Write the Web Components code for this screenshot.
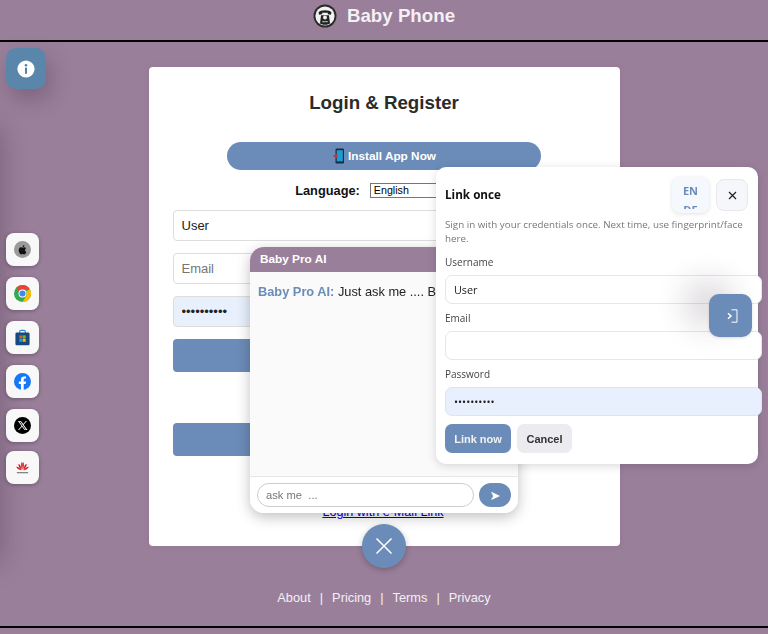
<!DOCTYPE html>
<html lang="en">
<head>
<meta charset="utf-8">
<title>Baby Phone</title>
<style>
  html, body { margin: 0; height: 634px; overflow: hidden; }
  body {
    background: #9a7f9b;
    font-family: "Liberation Sans", Arial, sans-serif;
    display: flex;
    flex-direction: column;
  }
</style>
</head>
<body>
<bp-header></bp-header>
<bp-main>
  <bp-login-card></bp-login-card>
</bp-main>
<bp-footer></bp-footer>

<bp-edge-shade></bp-edge-shade>
<bp-info-button></bp-info-button>
<bp-store-rail></bp-store-rail>
<bp-chat></bp-chat>
<bp-link-dialog></bp-link-dialog>
<bp-signin-button></bp-signin-button>
<bp-chat-toggle></bp-chat-toggle>

<script>
class BaseElement extends HTMLElement {
  connectedCallback() {
    if (this.shadowRoot) return;
    const shadow = this.attachShadow({ mode: 'open' });
    shadow.innerHTML = `<style>${this.constructor.css}</style>${this.constructor.html}`;
  }
}

class BpHeader extends BaseElement {
  static css = `
    :host {
      display: flex; align-items: center; justify-content: center; gap: 10px;
      height: 42px; padding-bottom: 9px; box-sizing: border-box;
      border-bottom: 2px solid #000; flex: none;
    }
    svg { width: 24px; height: 24px; display: block; }
    h1 { margin: 0; font-size: 18.72px; font-weight: 700; color: #f4f0f4; line-height: 24px; }
  `;
  static html = `
    <svg viewBox="0 0 24 24" aria-hidden="true">
      <circle cx="12" cy="12" r="11.5" fill="#2b2b2b"/>
      <circle cx="12" cy="12" r="9.6" fill="#f2f2f2"/>
      <path d="M5.5 8.5c1.500-3 11.500-3 13 0l-.6 2.300-3-.6-.2-1.500H9.300l-.2 1.500-3 .6z" fill="#222"/>
      <path d="M8 11.200h8l1 8.200c-3 1.800-7 1.800-10 0z" fill="#222"/>
      <circle cx="12" cy="13.600" r="2" fill="#eee"/>
      <path d="M9.500 17h1.200v1.200H9.500zM11.400 17h1.200v1.200h-1.200zM13.300 17h1.200v1.200h-1.200z" fill="#eee"/>
    </svg>
    <h1>Baby Phone</h1>
  `;
}

class BpMain extends BaseElement {
  static css = `
    :host { display: flex; justify-content: center; padding-top: 25px; flex: none; height: 504px; box-sizing: border-box; }
  `;
  static html = `<slot></slot>`;
}

class BpLoginCard extends BaseElement {
  static css = `
    :host {
      display: block; box-sizing: border-box; width: 471px; height: 479px;
      background: #fff; border-radius: 4px; padding: 24px;
      box-shadow: 0 0 6px rgba(0,0,0,.08);
      color: #222;
    }
    h2 { margin: 0; text-align: center; font-size: 18.72px; line-height: 24px; font-weight: 700; color: #2b2b2b; }
    .install {
      display: flex; align-items: center; justify-content: center; gap: 3px;
      width: 314px; height: 28px; margin: 27px auto 0; border-radius: 14px;
      background: #6b8cb8; color: #fff; font: 700 11.8px "Liberation Sans", Arial, sans-serif; border: 0;
      padding: 0;
    }
    .install svg { width: 13px; height: 16px; }
    .lang { display: flex; align-items: center; justify-content: center; gap: 10px; height: 20px; margin-top: 10px; font-size: 12.8px; font-weight: 700; color: #111; }
    select {
      width: 103px; height: 15px; font: 10.7px "Liberation Sans", Arial, sans-serif; padding: 0 0 0 3px;
      border: 1px solid #767676; border-radius: 0; background: #fff; color: #000;
      appearance: none;
    }
    input {
      display: block; box-sizing: border-box; width: 100%; height: 31px; margin-top: 12px;
      border: 1px solid #ddd; border-radius: 4px; padding: 0 8px 1px;
      font: 13px "Liberation Sans", Arial, sans-serif; color: #222; background: #fff; outline: none;
    }
    input::placeholder { color: #757575; }
    input.first { margin-top: 10px; }
    input.filled { background: #e8f0fe; }
    .action { display: block; width: 100%; height: 33px; margin-top: 12px; background: #6b8cb8; border: 0; border-radius: 4px; padding: 0; }
    .action.second { margin-top: 51px; }
    a { display: block; text-align: center; margin-top: 49px; margin-right: 2px; font-size: 12.6px; line-height: 15px; color: #0000ee; text-decoration: underline; }
  `;
  static html = `
    <h2>Login &amp; Register</h2>
    <button class="install">
      <svg viewBox="0 0 13 16" aria-hidden="true">
        <rect x="3.5" y="0.5" width="8.5" height="15" rx="1.2" fill="#1c2b3a"/>
        <rect x="4.7" y="2.2" width="6.1" height="11.2" fill="#1e9bd7"/>
        <path d="M1.500 7h2.100V5.400L6.400 8 3.600 10.600V9H1.500z" fill="#c0392b"/>
      </svg>
      Install App Now
    </button>
    <div class="lang">
      <label for="lang">Language:</label>
      <select id="lang"><option>English</option></select>
    </div>
    <input class="first" type="text" value="User" aria-label="Username">
    <input type="email" placeholder="Email">
    <input class="filled" type="password" value="••••••••••" aria-label="Password">
    <button class="action" aria-label="Login"></button>
    <button class="action second" aria-label="Register"></button>
    <a href="#">Login with e-Mail Link</a>
  `;
}

class BpFooter extends BaseElement {
  static css = `
    :host {
      display: flex; align-items: flex-start; justify-content: center; flex: none;
      height: 82px; box-sizing: border-box; padding-top: 44px;
      border-bottom: 2px solid #000;
      color: #f4f0f4; font-size: 12.8px; line-height: 16px;
    }
    a { color: inherit; text-decoration: none; }
    span { margin: 0 9px; }
  `;
  static html = `
    <a href="#">About</a><span>|</span><a href="#">Pricing</a><span>|</span><a href="#">Terms</a><span>|</span><a href="#">Privacy</a>
  `;
}

// soft shadow of a panel parked just off the left edge
class BpEdgeShade extends BaseElement {
  static css = `
    :host {
      position: fixed; left: -30px; top: 130px; width: 30px; height: 430px;
      box-shadow: 0 0 26px 2px rgba(50,30,50,.3);
    }
  `;
  static html = ``;
}

class BpInfoButton extends BaseElement {
  static css = `
    :host {
      position: fixed; left: 6px; top: 48px; width: 40px; height: 41px;
      background: #5b86ab; border-radius: 10px;
      display: flex; align-items: center; justify-content: center;
      box-shadow: 4px 10px 22px rgba(60,40,60,.32);
    }
    svg { width: 18px; height: 18px; }
  `;
  static html = `
    <svg viewBox="0 0 18 18" aria-hidden="true">
      <circle cx="9" cy="9" r="8.6" fill="#fff"/>
      <circle cx="9" cy="5.200" r="1.300" fill="#5b7f9f"/>
      <rect x="8" y="7.600" width="2" height="6.200" fill="#5b7f9f"/>
    </svg>
  `;
}

const STORE_ICONS = {
  apple: `<circle cx="12" cy="12" r="12" fill="#9a9a9a"/>
    <path d="M15.6 12.600c0-1.600 1.300-2.300 1.400-2.400-.8-1.100-2-1.300-2.400-1.300-1-.1-2 .6-2.500.6s-1.300-.6-2.200-.6c-1.100 0-2.100.7-2.700 1.700-1.200 2-.3 5 .8 6.600.6.800 1.200 1.700 2.100 1.700.8 0 1.200-.5 2.200-.5s1.300.5 2.200.5 1.500-.8 2-1.600c.6-.9.9-1.800.9-1.900-.1 0-1.800-.7-1.800-2.800zM14 7.800c.5-.6.8-1.400.7-2.200-.7 0-1.500.5-2 1.100-.4.5-.8 1.300-.7 2.100.8.100 1.500-.4 2-1z" fill="#111"/>`,
  chrome: `<circle cx="12" cy="12" r="12" fill="#34a853"/>
    <path d="M12 0a12 12 0 0 1 10.400 6H12a6 6 0 0 0-5.200 3L3.300 3.700A12 12 0 0 1 12 0z" fill="#ea4335"/>
    <path d="M22.400 6A12 12 0 0 1 12 24l5.200-9a6 6 0 0 0 0-6z" fill="#fbbc05"/>
    <circle cx="12" cy="12" r="5.600" fill="#fff"/><circle cx="12" cy="12" r="4.300" fill="#4285f4"/>`,
  store: `<path d="M8 6V4a2 2 0 0 1 2-2h4a2 2 0 0 1 2 2v2" fill="none" stroke="#2b88d8" stroke-width="1.600"/>
    <rect x="2" y="5" width="20" height="18" rx="2" fill="#17497e"/>
    <rect x="7.500" y="9" width="4.200" height="4.200" fill="#f25022"/><rect x="12.300" y="9" width="4.200" height="4.200" fill="#7fba00"/>
    <rect x="7.500" y="13.800" width="4.200" height="4.200" fill="#00a4ef"/><rect x="12.300" y="13.800" width="4.200" height="4.200" fill="#ffb900"/>`,
  facebook: `<circle cx="12" cy="12" r="12" fill="#1877f2"/>
    <path d="M16.500 15.500l.5-3.500h-3.300V9.800c0-1 .5-1.900 2-1.900H17V5c0 0-1.400-.2-2.700-.2-2.700 0-4.500 1.600-4.500 4.600V12h-3v3.500h3V24h3.900v-8.500z" fill="#fff"/>`,
  x: `<circle cx="12" cy="12" r="12" fill="#000"/>
    <path d="M5.500 5.500h4.200l3.300 4.500 3.800-4.500h1.400l-4.600 5.400 5.500 7.600h-4.200l-3.600-4.900-4.200 4.900H5.700l5-5.800z M7.500 6.500l8.100 11h1.300l-8.100-11z" fill="#fff" fill-rule="evenodd"/>`,
  huawei: `<g fill="#d6202a">
      <path d="M11.600 15.500C9.800 11.500 9.600 7.500 10.600 4.500c1.200.4 1.800 1.600 1.600 3z"/>
      <path d="M12.400 15.500c1.800-4 2-8 1-11-1.200.4-1.800 1.600-1.600 3z"/>
      <path d="M11 15.500C8 13 6 10.500 6.200 7c1.600.2 3 1.500 3.200 3.200z"/>
      <path d="M13 15.500c3-2.500 5-5 4.800-8.500-1.600.2-3 1.500-3.200 3.200z"/>
      <path d="M10.600 16C7.500 15.500 4.500 14 3 10.800c2.800-.2 6 2 7.600 5.200z"/>
      <path d="M13.400 16c3.100-.5 6.100-2 7.600-5.200-2.800-.2-6 2-7.600 5.200z"/>
    </g>
    <rect x="4" y="18.500" width="16" height="1.600" fill="#777"/>`
};

class BpStoreButton extends BaseElement {
  static css = `
    :host {
      display: flex; align-items: center; justify-content: center;
      width: 33px; height: 33px; border-radius: 8px; background: #f8f8f8;
      box-shadow: 0 1px 4px rgba(0,0,0,.3);
    }
    svg { display: block; }
  `;
  static html = `<svg viewBox="0 0 24 24" width="17" height="17" aria-hidden="true"></svg>`;
  connectedCallback() {
    super.connectedCallback();
    const svg = this.shadowRoot.querySelector('svg');
    svg.innerHTML = STORE_ICONS[this.getAttribute('icon')] || '';
  }
}

class BpStoreRail extends BaseElement {
  static css = `
    :host {
      position: fixed; left: 6px; top: 233px;
      display: grid; gap: 11px; grid-template-columns: 33px;
    }
    bp-store-button:last-child { margin-top: -2px; }
  `;
  static html = `
    <bp-store-button icon="apple"></bp-store-button>
    <bp-store-button icon="chrome"></bp-store-button>
    <bp-store-button icon="store"></bp-store-button>
    <bp-store-button icon="facebook"></bp-store-button>
    <bp-store-button icon="x"></bp-store-button>
    <bp-store-button icon="huawei"></bp-store-button>
  `;
}

class BpChat extends BaseElement {
  static css = `
    :host {
      position: fixed; left: 250px; top: 247px; width: 268px; height: 266px;
      display: flex; flex-direction: column; overflow: hidden;
      background: #fff; border-radius: 14px;
      box-shadow: 0 4px 14px rgba(0,0,0,.25);
    }
    header { flex: none; height: 25px; background: #9a7f9b; color: #fff; font-size: 11.8px; font-weight: 700; line-height: 25px; padding-left: 10px; }
    .log { flex: 1; background: #fafafa; padding: 12px 8px; font-size: 12.8px; line-height: 16px; color: #222; white-space: nowrap; overflow: hidden; }
    .log b { color: #6b8cb8; }
    form { flex: none; height: 37px; box-sizing: border-box; display: flex; align-items: center; gap: 5px; padding: 0 7px; border-top: 1px solid #e6e6e6; background: #fff; margin: 0; }
    input { flex: 1; min-width: 0; box-sizing: border-box; height: 24px; border: 1px solid #ccc; border-radius: 12px; padding: 0 8px; font: 11.2px "Liberation Sans", Arial, sans-serif; outline: none; }
    input::placeholder { color: #777; }
    button { flex: none; width: 32px; height: 24px; border: 0; border-radius: 12px; background: #6b8cb8; color: #fff; font: 13px "DejaVu Sans", sans-serif; padding: 0; }
  `;
  static html = `
    <header>Baby Pro AI</header>
    <div class="log"><b>Baby Pro AI:</b> Just ask me .... Baby Pro AI</div>
    <form><input type="text" placeholder="ask me&nbsp;&nbsp;..."><button type="button">➤</button></form>
  `;
}

class BpLinkDialog extends BaseElement {
  static css = `
    :host {
      position: fixed; left: 436px; top: 167px; width: 322px; height: 297px;
      box-sizing: border-box; padding: 10px 10px 0 9px;
      background: #fff; border-radius: 10px;
      box-shadow: 0 2px 10px rgba(0,0,0,.15);
      font-family: "Open Sans", "Noto Sans", sans-serif; color: #333;
    }
    .top { display: flex; align-items: flex-start; height: 36px; }
    h3 { margin: 0; flex: 1; align-self: center; margin-top: -2px; font-size: 11.7px; font-weight: 700; color: #111; }
    .lang { width: 37px; height: 36px; border-radius: 8px; background: #f5f8fc; box-shadow: 0 1px 4px rgba(0,0,0,.12); color: #6b8cb8; font-size: 11px; font-weight: 700; text-align: center; box-sizing: border-box; padding-top: 4px; }
    .lang .clip { height: 28px; overflow: hidden; line-height: 19px; }
    .close { flex: none; width: 32px; height: 32px; margin: 2px 0 0 7px; box-sizing: border-box; border: 1px solid #e6e8ee; border-radius: 8px; background: #f6f7fa; display: flex; align-items: center; justify-content: center; padding: 0; }
    .close svg { width: 9px; height: 9px; }
    p { margin: 5px 0 0; font-size: 9.8px; line-height: 14px; color: #777; }
    label { display: block; font-size: 10px; line-height: 14px; color: #444; margin-top: 7px; }
    label.first { margin-top: 9px; }
    input { display: block; box-sizing: border-box; width: 317px; height: 29px; margin-top: 6px; border: 1px solid #e6e6e6; border-radius: 7px; padding: 0 8px; font: 10.8px "Open Sans", "Noto Sans", sans-serif; color: #222; background: #fff; outline: none; }
    input.filled { background: #e8f0fe; border-color: #dde4ee; }
    .row { display: flex; gap: 6px; margin-top: 8px; }
    button.go, button.cancel { height: 29px; border: 0; border-radius: 7px; padding: 0; font: 700 11px "Liberation Sans", Arial, sans-serif; }
    button.go { width: 66px; background: #6b8cb8; color: #f2f2f2; }
    button.cancel { width: 55px; background: #ebebf0; color: #333; }
  `;
  static html = `
    <div class="top">
      <h3>Link once</h3>
      <div class="lang"><div class="clip"><div>EN</div><div>DE</div></div></div>
      <button class="close" aria-label="Close">
        <svg viewBox="0 0 9 9" aria-hidden="true"><path d="M1 1l7 7M8 1L1 8" stroke="#222" stroke-width="1.200" fill="none"/></svg>
      </button>
    </div>
    <p>Sign in with your credentials once. Next time, use fingerprint/face here.</p>
    <label class="first">Username</label>
    <input type="text" value="User">
    <label>Email</label>
    <input type="email">
    <label>Password</label>
    <input class="filled" type="password" value="••••••••••">
    <div class="row">
      <button class="go">Link now</button>
      <button class="cancel">Cancel</button>
    </div>
  `;
}

class BpSigninButton extends BaseElement {
  static css = `
    :host {
      position: fixed; left: 709px; top: 294px; width: 43px; height: 43px;
      background: #6b8cb8; border-radius: 10px;
      display: flex; align-items: center; justify-content: center;
      box-shadow: -22px -12px 30px rgba(60,40,60,.18), 0 1px 3px rgba(60,40,60,.15);
    }
    svg { width: 11px; height: 14px; margin-left: 3px; }
  `;
  static html = `
    <svg viewBox="0 0 11 14" aria-hidden="true">
      <path d="M4.500 .8h5.500v12.400H4.500" fill="none" stroke="#fff" stroke-width="1"/>
      <path d="M1 4.300L4 7 1 9.700" fill="none" stroke="#fff" stroke-width="1.500"/>
    </svg>
  `;
}

class BpChatToggle extends BaseElement {
  static css = `
    :host {
      position: fixed; left: 362px; top: 524px; width: 44px; height: 44px;
      background: #6b8cb8; border-radius: 50%;
      display: flex; align-items: center; justify-content: center;
      box-shadow: 0 2px 6px rgba(0,0,0,.25);
    }
    svg { width: 18px; height: 18px; }
  `;
  static html = `
    <svg viewBox="0 0 18 18" aria-hidden="true"><path d="M1.500 1.500l15 15M16.500 1.500l-15 15" stroke="#fff" stroke-width="1.500" fill="none"/></svg>
  `;
}

customElements.define('bp-header', BpHeader);
customElements.define('bp-main', BpMain);
customElements.define('bp-login-card', BpLoginCard);
customElements.define('bp-footer', BpFooter);
customElements.define('bp-edge-shade', BpEdgeShade);
customElements.define('bp-info-button', BpInfoButton);
customElements.define('bp-store-button', BpStoreButton);
customElements.define('bp-store-rail', BpStoreRail);
customElements.define('bp-chat', BpChat);
customElements.define('bp-link-dialog', BpLinkDialog);
customElements.define('bp-signin-button', BpSigninButton);
customElements.define('bp-chat-toggle', BpChatToggle);
</script>
</body>
</html>
